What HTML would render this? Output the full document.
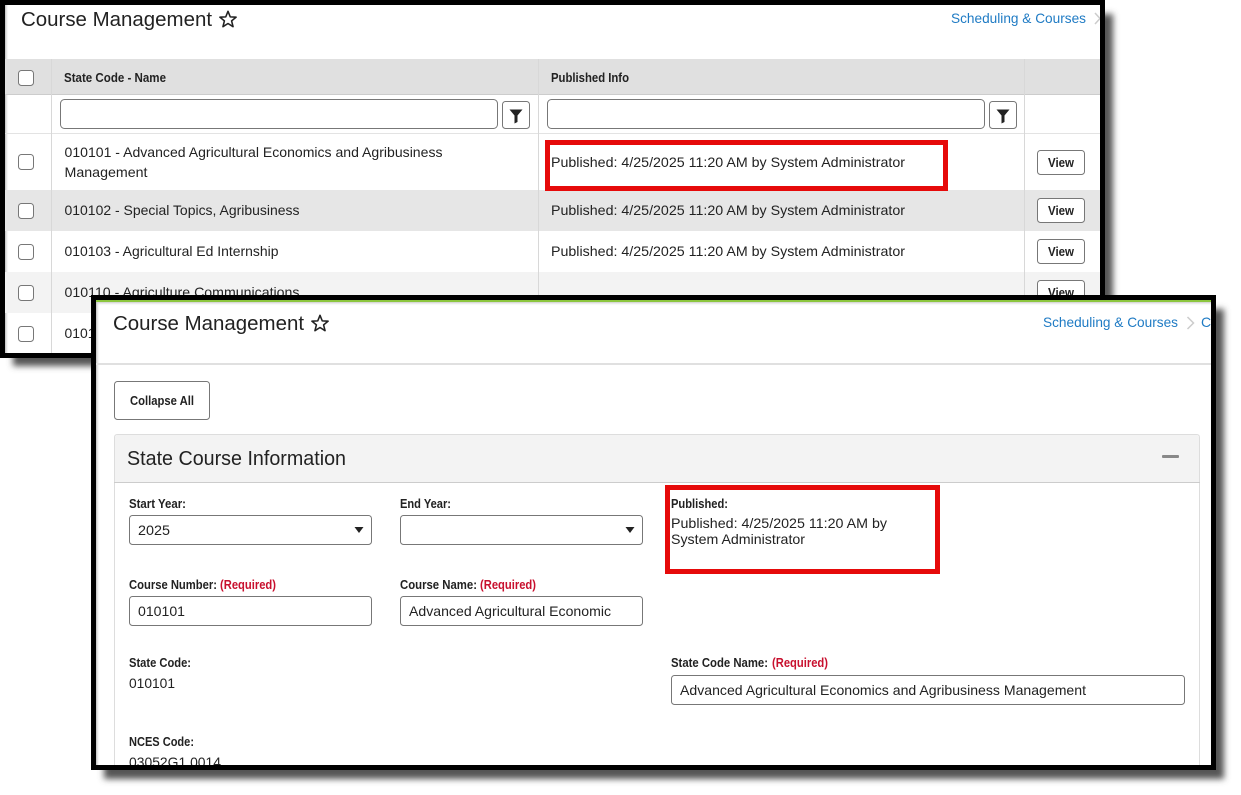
<!DOCTYPE html>
<html><head><meta charset="utf-8"><title>Course Management</title>
<style>
html,body{margin:0;padding:0;background:#fff;width:1241px;height:795px;overflow:hidden}
svg{display:block}
text{font-family:"Liberation Sans",sans-serif;font-size:14px;fill:#222}
.b{font-weight:bold;font-size:12.5px}
.r{font-weight:bold;font-size:12.5px;fill:#c8102e}
.t{font-size:20.5px}
.l{fill:#1f7bc4}
.f{fill:#fff;stroke:#777;stroke-width:1}
</style></head><body>
<svg width="1241" height="795" viewBox="0 0 1241 795" xmlns="http://www.w3.org/2000/svg">
<defs>
<filter id="bl" x="-5%" y="-5%" width="110%" height="110%"><feGaussianBlur stdDeviation="3.2"/></filter>
<linearGradient id="gl" x1="0" x2="1" y1="0" y2="0"><stop offset="0" stop-color="#bbb"/><stop offset="1" stop-color="#fff" stop-opacity="0"/></linearGradient>
<linearGradient id="gt" x1="0" x2="0" y1="0" y2="1"><stop offset="0" stop-color="#ccc"/><stop offset="1" stop-color="#fff" stop-opacity="0"/></linearGradient>
<clipPath id="c1"><rect x="5" y="5" width="1095" height="348"/></clipPath>
<clipPath id="c2"><rect x="96" y="300" width="1115" height="465"/></clipPath>
<symbol id="star" viewBox="0 0 16 16"><path d="M8 1.2 10 6.1 15.2 6.4 11.2 9.7 12.5 14.8 8 12 3.5 14.8 4.8 9.7 .8 6.4 6 6.1Z" fill="none" stroke="#222" stroke-width="1.4" stroke-linejoin="round"/></symbol>
<g id="fb"><rect x=".5" y=".5" width="27" height="27" rx="3" class="f"/><path d="M7.5 8.5H20.5L15.5 14.5V21L12.5 22.5V14.5Z" fill="#222"/></g>
<g id="vb"><rect x=".5" y=".5" width="47" height="24" rx="3" class="f"/><text x="11" y="17" class="b" textLength="26" lengthAdjust="spacingAndGlyphs">View</text></g>
<rect id="cb" width="15" height="15" rx="3" fill="#fff" stroke="#777" stroke-width="1"/>
</defs>

<!-- window 1 shadow and frame -->
<rect x="13" y="14" width="1100" height="352" fill="#555" filter="url(#bl)"/>
<rect x="0" y="0" width="1105" height="358" fill="#000"/>
<rect x="5" y="5" width="1095" height="348" fill="#fff"/>
<g clip-path="url(#c1)">
<rect x="5" y="5" width="4" height="348" fill="url(#gl)"/>
<text x="21" y="26" class="t" textLength="191" lengthAdjust="spacingAndGlyphs">Course Management</text>
<use href="#star" x="219" y="10" width="18" height="18"/>
<text x="951" y="23" class="l" textLength="135" lengthAdjust="spacingAndGlyphs">Scheduling &amp; Courses</text>
<path d="M1095 13 1100 18.500 1095 24" fill="none" stroke="#ccc" stroke-width="1.500"/>

<rect x="5" y="59" width="1095" height="35" fill="#e0e0e0"/>
<rect x="5" y="94" width="1095" height="1" fill="#ccc"/>
<rect x="5" y="133" width="1095" height="1" fill="#e3e3e3"/>
<rect x="5" y="190" width="1095" height="41" fill="#e6e6e6"/>
<rect x="5" y="272" width="1095" height="41" fill="#f3f3f3"/>
<rect x="51" y="59" width="1" height="294" fill="#d8d8d8"/>
<rect x="538" y="59" width="1" height="294" fill="#d8d8d8"/>
<rect x="1024" y="59" width="1" height="294" fill="#d8d8d8"/>

<use href="#cb" x="18.500" y="70.500"/>
<use href="#cb" x="18.500" y="154.500"/>
<use href="#cb" x="18.500" y="203.500"/>
<use href="#cb" x="18.500" y="244.500"/>
<use href="#cb" x="18.500" y="285.500"/>
<use href="#cb" x="18.500" y="326.500"/>

<text x="64" y="82" class="b" textLength="102" lengthAdjust="spacingAndGlyphs">State Code - Name</text>
<text x="551" y="82" class="b" textLength="78" lengthAdjust="spacingAndGlyphs">Published Info</text>

<rect x="60.500" y="99.500" width="437" height="29" rx="4" class="f"/>
<use href="#fb" x="502" y="101"/>
<rect x="547.500" y="99.500" width="437" height="29" rx="4" class="f"/>
<use href="#fb" x="989" y="101"/>

<text x="64.500" y="157" textLength="378" lengthAdjust="spacingAndGlyphs">010101 - Advanced Agricultural Economics and Agribusiness</text>
<text x="64.500" y="177" textLength="83" lengthAdjust="spacingAndGlyphs">Management</text>
<text x="551" y="167" textLength="354" lengthAdjust="spacingAndGlyphs">Published: 4/25/2025 11:20 AM by System Administrator</text>
<text x="64.500" y="215" textLength="235" lengthAdjust="spacingAndGlyphs">010102 - Special Topics, Agribusiness</text>
<text x="551" y="215" textLength="354" lengthAdjust="spacingAndGlyphs">Published: 4/25/2025 11:20 AM by System Administrator</text>
<text x="64.500" y="256" textLength="214" lengthAdjust="spacingAndGlyphs">010103 - Agricultural Ed Internship</text>
<text x="551" y="256" textLength="354" lengthAdjust="spacingAndGlyphs">Published: 4/25/2025 11:20 AM by System Administrator</text>
<text x="64.500" y="297" textLength="235" lengthAdjust="spacingAndGlyphs">010110 - Agriculture Communications</text>
<text x="64.500" y="338" textLength="31" lengthAdjust="spacingAndGlyphs">0101</text>

<use href="#vb" x="1037" y="150"/>
<use href="#vb" x="1037" y="198"/>
<use href="#vb" x="1037" y="239"/>
<use href="#vb" x="1037" y="280"/>
<rect x="547.500" y="142.500" width="398" height="46" fill="none" stroke="#e60a0a" stroke-width="5"/>
</g>

<!-- window 2 shadow and frame -->
<rect x="104" y="309" width="1120" height="470" fill="#555" filter="url(#bl)"/>
<rect x="91" y="295" width="1125" height="475" fill="#000"/>
<rect x="96" y="300" width="1115" height="465" fill="#fff"/>
<g clip-path="url(#c2)">
<rect x="96" y="300" width="1115" height="2" fill="#8cc63f"/>
<rect x="96" y="302" width="1115" height="4" fill="url(#gt)"/>
<rect x="96" y="302" width="4" height="463" fill="url(#gl)"/>
<text x="113" y="330" class="t" textLength="191" lengthAdjust="spacingAndGlyphs">Course Management</text>
<use href="#star" x="311" y="314" width="18" height="18"/>
<text x="1043" y="327" class="l" textLength="135" lengthAdjust="spacingAndGlyphs">Scheduling &amp; Courses</text>
<path d="M1187.500 317 1193.500 323 1187.500 329" fill="none" stroke="#ccc" stroke-width="1.500"/>
<text x="1201" y="327" class="l">C</text>
<rect x="96" y="363" width="1115" height="2" fill="#e0e0e0"/>

<rect x="114.500" y="381.500" width="95" height="38" rx="3" class="f"/>
<text x="130" y="405" class="b" textLength="64" lengthAdjust="spacingAndGlyphs">Collapse All</text>

<path d="M114.500 765V437.500Q114.500 434.500 117.500 434.500H1196.500Q1199.500 434.500 1199.500 437.500V765" fill="#fff" stroke="#ddd"/>
<path d="M115 482V437.500Q115 435 118 435H1196Q1199 435 1199 437.500V482Z" fill="#f3f3f3"/>
<rect x="114" y="482" width="1086" height="1" fill="#ccc"/>
<text x="127" y="465" class="t" textLength="219" lengthAdjust="spacingAndGlyphs">State Course Information</text>
<rect x="1162" y="455" width="17" height="3" rx="1" fill="#888"/>

<text x="129" y="508" class="b" textLength="57" lengthAdjust="spacingAndGlyphs">Start Year:</text>
<text x="400" y="508" class="b" textLength="51" lengthAdjust="spacingAndGlyphs">End Year:</text>
<rect x="129.500" y="515.500" width="242" height="29" rx="3" class="f"/>
<rect x="400.500" y="515.500" width="242" height="29" rx="3" class="f"/>
<text x="138" y="535" textLength="32" lengthAdjust="spacingAndGlyphs">2025</text>
<path d="M354.500 527H363.500L359 533Z" fill="#222"/>
<path d="M625.500 527H634.500L630 533Z" fill="#222"/>

<text x="129" y="589" class="b" textLength="88" lengthAdjust="spacingAndGlyphs">Course Number:</text>
<text x="220" y="589" class="r" textLength="56" lengthAdjust="spacingAndGlyphs">(Required)</text>
<text x="400" y="589" class="b" textLength="77" lengthAdjust="spacingAndGlyphs">Course Name:</text>
<text x="480" y="589" class="r" textLength="56" lengthAdjust="spacingAndGlyphs">(Required)</text>
<rect x="129.500" y="596.500" width="242" height="29" rx="3" class="f"/>
<rect x="400.500" y="596.500" width="242" height="29" rx="3" class="f"/>
<text x="138" y="616" textLength="47" lengthAdjust="spacingAndGlyphs">010101</text>
<text x="409" y="616" textLength="202" lengthAdjust="spacingAndGlyphs">Advanced Agricultural Economic</text>

<text x="129" y="667" class="b" textLength="62" lengthAdjust="spacingAndGlyphs">State Code:</text>
<text x="129" y="688" textLength="46" lengthAdjust="spacingAndGlyphs">010101</text>
<text x="129" y="746" class="b" textLength="65" lengthAdjust="spacingAndGlyphs">NCES Code:</text>
<text x="129" y="767" textLength="92" lengthAdjust="spacingAndGlyphs">03052G1.0014</text>

<text x="671" y="508" class="b" textLength="57" lengthAdjust="spacingAndGlyphs">Published:</text>
<text x="671" y="528" textLength="216" lengthAdjust="spacingAndGlyphs">Published: 4/25/2025 11:20 AM by</text>
<text x="671" y="544" textLength="134" lengthAdjust="spacingAndGlyphs">System Administrator</text>
<rect x="667.500" y="487.500" width="270" height="84" fill="none" stroke="#e60a0a" stroke-width="5"/>

<text x="671" y="667" class="b" textLength="97" lengthAdjust="spacingAndGlyphs">State Code Name:</text>
<text x="772" y="667" class="r" textLength="56" lengthAdjust="spacingAndGlyphs">(Required)</text>
<rect x="671.500" y="675.500" width="513" height="29" rx="3" class="f"/>
<text x="680" y="695" textLength="406" lengthAdjust="spacingAndGlyphs">Advanced Agricultural Economics and Agribusiness Management</text>
</g>
</svg>
</body></html>
